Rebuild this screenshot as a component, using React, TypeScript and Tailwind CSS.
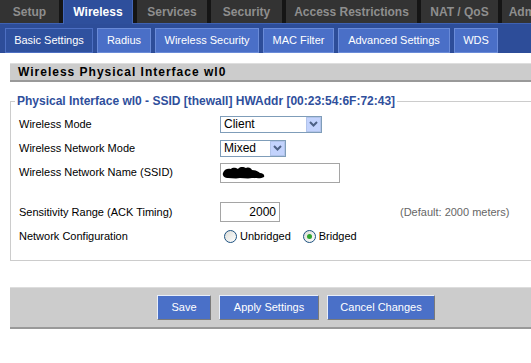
import React from 'react';

const mainTabs = [
  { label: 'Setup', w: 'w-[59px]' },
  { label: 'Wireless', w: 'w-[70px]', active: true },
  { label: 'Services', w: 'w-[70px]' },
  { label: 'Security', w: 'w-[71px]' },
  { label: 'Access Restrictions', w: 'w-[131px]' },
  { label: 'NAT / QoS', w: 'w-[77px]' },
  { label: 'Adm', w: 'w-[40px]' },
];

const subTabs = [
  { label: 'Basic Settings', w: 'w-[88px]', active: true },
  { label: 'Radius', w: 'w-[54px]' },
  { label: 'Wireless Security', w: 'w-[104px]' },
  { label: 'MAC Filter', w: 'w-[71px]' },
  { label: 'Advanced Settings', w: 'w-[112px]' },
  { label: 'WDS', w: 'w-[44px]' },
];

function Chevron() {
  return (
    <svg width="9" height="6" viewBox="0 0 9 6">
      <path d="M1 1 L4.5 4.5 L8 1" stroke="#4d6185" strokeWidth="2" fill="none" />
    </svg>
  );
}

function Select({ value, width }: { value: string; width: string }) {
  return (
    <div className={`${width} h-[17px] flex items-center border border-[#7f9db9] bg-white`}>
      <span className="flex-1 pl-[3px] text-[12px] leading-none text-black">{value}</span>
      <div className="w-[15px] h-[15px] flex items-center justify-center bg-[#c3d3fd] border border-[#b2c4ea]">
        <Chevron />
      </div>
    </div>
  );
}

function Radio({ checked, label }: { checked?: boolean; label: string }) {
  return (
    <div className="flex items-center gap-[3px]">
      <div className="w-[13px] h-[13px] rounded-full border border-[#1c5180] bg-gradient-to-br from-[#dcdcd7] to-white flex items-center justify-center">
        {checked && <div className="w-[5px] h-[5px] rounded-full bg-[#2fa52f]" />}
      </div>
      <span>{label}</span>
    </div>
  );
}

function Redacted() {
  return (
    <svg width="44" height="14" viewBox="0 0 44 14">
      <path
        d="M1 7 C2 3 6 2 9 3 C11 1 14 2 16 3 C18 0 22 1 24 2 C27 1 29 2 30 4 C33 4 36 5 38 7 C41 7 43 9 42 11 C39 13 34 12 30 12 C26 13 22 12 18 12 C14 13 10 12 6 12 C3 12 0 10 1 7 Z"
        fill="#000"
      />
    </svg>
  );
}

function Row({ label, h, children }: { label: string; h: string; children: React.ReactNode }) {
  return (
    <div className={`flex items-center ${h}`}>
      <div className="w-[201px] shrink-0">{label}</div>
      {children}
    </div>
  );
}

export default function App() {
  return (
    <div className="w-[531px] h-[363px] overflow-hidden bg-white text-[11px] text-black" style={{ fontFamily: '"Liberation Sans", Arial, sans-serif' }}>
      {/* main tabs */}
      <div className="flex gap-[4px] h-[23px] bg-[#151515] w-[600px]">
        {mainTabs.map(t => (
          <div
            key={t.label}
            className={`${t.w} shrink-0 flex items-center justify-center text-[12px] font-bold ${
              t.active
                ? 'bg-[#2e4f9c] text-white h-[24px] border-x border-[#4467b8]'
                : 'bg-[#333333] text-[#8e8e8e]'
            }`}
          >
            {t.label}
          </div>
        ))}
      </div>

      {/* sub tabs */}
      <div className="h-[30px] bg-[#2d4d99] border-t border-[#3f62b3] flex items-end gap-[4px] pl-[5px]">
        {subTabs.map(t => (
          <div
            key={t.label}
            className={`${t.w} shrink-0 h-[25px] flex items-center justify-center text-white text-[11px] border ${
              t.active ? 'bg-[#2f519f] border-[#4d6fc2]' : 'bg-[#4a6fc7] border-[#6a8bd8]'
            }`}
          >
            {t.label}
          </div>
        ))}
      </div>

      {/* content */}
      <div className="ml-[10px] w-[600px] pt-[10px]">
        <div className="h-[19px] bg-[#cccccc] border-t border-[#dedede] border-b-2 border-b-[#999999] flex items-center pl-[8px] text-[12px] font-bold tracking-[1px]">
          Wireless Physical Interface wl0
        </div>

        <fieldset className="mt-[10px] border border-[#cccccc] pb-[11px]">
          <legend className="ml-[4px] px-[2px] text-[12px] font-bold text-[#2f4f9c]">
            Physical Interface wl0 - SSID [thewall] HWAddr [00:23:54:6F:72:43]
          </legend>
          <div className="flex flex-col pt-[2px] pl-[8px]">
            <Row label="Wireless Mode" h="h-[24px]">
              <Select value="Client" width="w-[102px]" />
            </Row>
            <Row label="Wireless Network Mode" h="h-[24px]">
              <Select value="Mixed" width="w-[66px]" />
            </Row>
            <Row label="Wireless Network Name (SSID)" h="h-[25px]">
              <div className="w-[120px] h-[20px] border border-[#a5a5a5] bg-white flex items-center pl-[1px]">
                <Redacted />
              </div>
            </Row>
            <div className="h-[15px]" />
            <Row label="Sensitivity Range (ACK Timing)" h="h-[24px]">
              <div className="w-[60px] h-[20px] border border-[#a5a5a5] bg-white flex items-center justify-end pr-[3px] text-[12px]">
                2000
              </div>
              <span className="ml-[120px] text-[#666666]">(Default: 2000 meters)</span>
            </Row>
            <Row label="Network Configuration" h="h-[25px]">
              <div className="flex items-center gap-[12px] pl-[4px]">
                <Radio label="Unbridged" />
                <Radio label="Bridged" checked />
              </div>
            </Row>
          </div>
        </fieldset>

        {/* buttons */}
        <div className="mt-[26px] h-[42px] bg-[#cccccc] border-t border-[#dddddd] border-b-2 border-b-[#999999] flex items-center gap-[8px] pl-[147px]">
          {['Save', 'Apply Settings', 'Cancel Changes'].map((b, i) => (
            <button
              key={b}
              className={`${i === 0 ? 'w-[54px]' : i === 1 ? 'w-[100px]' : 'w-[108px]'} h-[25px] bg-[#4a70c8] text-white text-[11px] border border-t-[#e8eef9] border-l-[#e8eef9] border-b-[#7a7a7a] border-r-[#7a7a7a]`}
            >
              {b}
            </button>
          ))}
        </div>
      </div>
    </div>
  );
}
